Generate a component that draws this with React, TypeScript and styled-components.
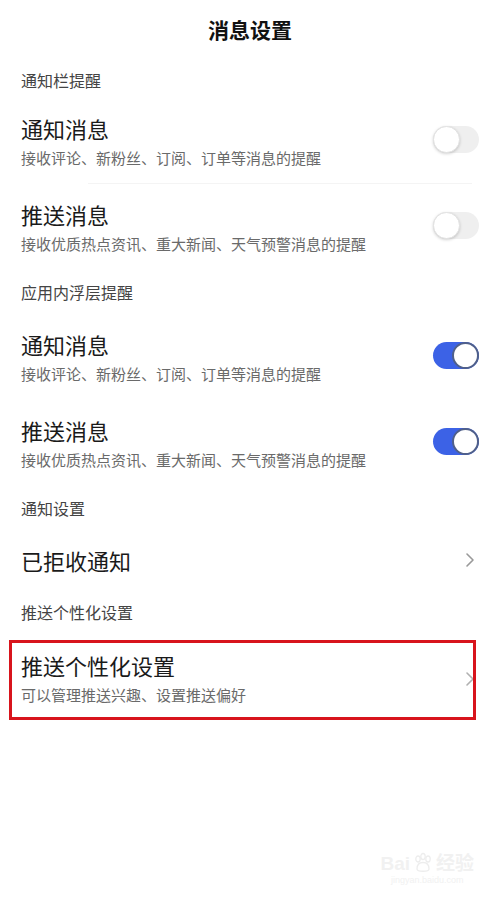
import React from 'react';
import styled, { createGlobalStyle } from 'styled-components';

const GlobalStyle = createGlobalStyle`
  html, body {
    margin: 0;
    padding: 0;
    background: #ffffff;
  }
  body {
    font-family: "Noto Sans CJK SC", "Noto Sans", sans-serif;
    color: #1a1a1a;
  }
`;

const Page = styled.div`
  position: relative;
  width: 500px;
  height: 900px;
  box-sizing: border-box;
  padding: 0 21px;
  background: #fff;
  overflow: hidden;
`;

const Header = styled.h1`
  margin: 0;
  height: 58px;
  line-height: 58px;
  text-align: center;
  font-size: 21px;
  font-weight: 700;
  color: #111;
`;

const SectionLabel = styled.div<{ first?: boolean }>`
  height: ${p => (p.first ? '40px' : '44px')};
  line-height: 44px;
  font-size: 16px;
  color: #444;
`;

const Row = styled.div<{ divider?: boolean; single?: boolean }>`
  position: relative;
  display: flex;
  align-items: center;
  justify-content: space-between;
  box-sizing: border-box;
  padding: ${p => (p.single ? '0' : '16px 0 15px')};
  height: ${p => (p.single ? '60px' : 'auto')};
  ${p => p.divider && `
    &::before {
      content: '';
      position: absolute;
      left: 67px;
      right: 7px;
      bottom: 0;
      height: 1px;
      background: #f4f4f4;
    }
  `}
`;

const Highlight = styled(Row)`
  margin-top: 6px;
  padding: 11px 0 14px;
  &::after {
    content: '';
    position: absolute;
    top: 0;
    bottom: 0;
    left: -12px;
    right: 3px;
    border: 3px solid #d8141c;
    pointer-events: none;
  }
`;

const Texts = styled.div`
  display: flex;
  flex-direction: column;
  gap: 5px;
`;

const Title = styled.div`
  font-size: 22px;
  line-height: 28px;
  color: #1a1a1a;
`;

const Sub = styled.div`
  font-size: 15px;
  line-height: 22px;
  color: #6a6a6a;
`;

const Track = styled.div<{ on: boolean }>`
  position: relative;
  flex: none;
  width: 46px;
  height: 27px;
  border-radius: 14px;
  background: ${p => (p.on ? '#3c62e6' : '#efefef')};
  margin-top: -4px;
`;

const Knob = styled.div<{ on: boolean }>`
  position: absolute;
  top: 0;
  left: ${p => (p.on ? '19px' : '0')};
  width: 27px;
  height: 27px;
  box-sizing: border-box;
  border-radius: 50%;
  background: #fff;
  border: ${p => (p.on ? '2px solid #50608a' : '1px solid #e2e2e2')};
  box-shadow: ${p => (p.on ? 'none' : '0 1px 3px rgba(0,0,0,0.18)')};
`;

const Chevron = styled.svg`
  flex: none;
  width: 10px;
  height: 16px;
  margin-right: 4px;
`;

const Watermark = styled.div`
  position: absolute;
  right: 26px;
  bottom: 14px;
  display: flex;
  flex-direction: column;
  align-items: center;
  color: #f1f1f1;
  font-family: "Liberation Sans", "Noto Sans CJK SC", sans-serif;
`;

const MarkTop = styled.div`
  display: flex;
  align-items: flex-end;
  gap: 2px;
  font-size: 19px;
  font-weight: 700;
  line-height: 20px;
`;

const MarkUrl = styled.div`
  font-size: 9px;
  line-height: 12px;
`;

const Toggle = ({ on }: { on: boolean }) => (
  <Track on={on}>
    <Knob on={on} />
  </Track>
);

const Arrow = ({ light }: { light?: boolean }) => (
  <Chevron viewBox="0 0 10 16">
    <path d="M2 2 L8 8 L2 14" fill="none" stroke={light ? '#b0b0b0' : '#999'} strokeWidth="1.6" strokeLinecap="round" strokeLinejoin="round" />
  </Chevron>
);

const Paw = () => (
  <svg width="22" height="22" viewBox="0 0 22 22">
    <g fill="none" stroke="#ededed" strokeWidth="1.3">
      <ellipse cx="6" cy="7" rx="2.2" ry="3" />
      <ellipse cx="11" cy="4.5" rx="2.2" ry="3" />
      <ellipse cx="16" cy="7" rx="2.2" ry="3" />
      <path d="M5 17 C5 12 8 10.5 11 10.5 C14 10.5 17 12 17 17 C17 20 5 20 5 17 Z" />
    </g>
  </svg>
);

export default function App() {
  return (
    <>
      <GlobalStyle />
      <Page>
        <Header>消息设置</Header>

        <SectionLabel first>通知栏提醒</SectionLabel>
        <Row divider>
          <Texts>
            <Title>通知消息</Title>
            <Sub>接收评论、新粉丝、订阅、订单等消息的提醒</Sub>
          </Texts>
          <Toggle on={false} />
        </Row>
        <Row>
          <Texts>
            <Title>推送消息</Title>
            <Sub>接收优质热点资讯、重大新闻、天气预警消息的提醒</Sub>
          </Texts>
          <Toggle on={false} />
        </Row>

        <SectionLabel>应用内浮层提醒</SectionLabel>
        <Row>
          <Texts>
            <Title>通知消息</Title>
            <Sub>接收评论、新粉丝、订阅、订单等消息的提醒</Sub>
          </Texts>
          <Toggle on />
        </Row>
        <Row>
          <Texts>
            <Title>推送消息</Title>
            <Sub>接收优质热点资讯、重大新闻、天气预警消息的提醒</Sub>
          </Texts>
          <Toggle on />
        </Row>

        <SectionLabel>通知设置</SectionLabel>
        <Row single>
          <Title>已拒收通知</Title>
          <Arrow />
        </Row>

        <SectionLabel>推送个性化设置</SectionLabel>
        <Highlight>
          <Texts>
            <Title>推送个性化设置</Title>
            <Sub>可以管理推送兴趣、设置推送偏好</Sub>
          </Texts>
          <Arrow light />
        </Highlight>

        <Watermark>
          <MarkTop>
            <span>Bai</span>
            <Paw />
            <span>经验</span>
          </MarkTop>
          <MarkUrl>jingyan.baidu.com</MarkUrl>
        </Watermark>
      </Page>
    </>
  );
}
